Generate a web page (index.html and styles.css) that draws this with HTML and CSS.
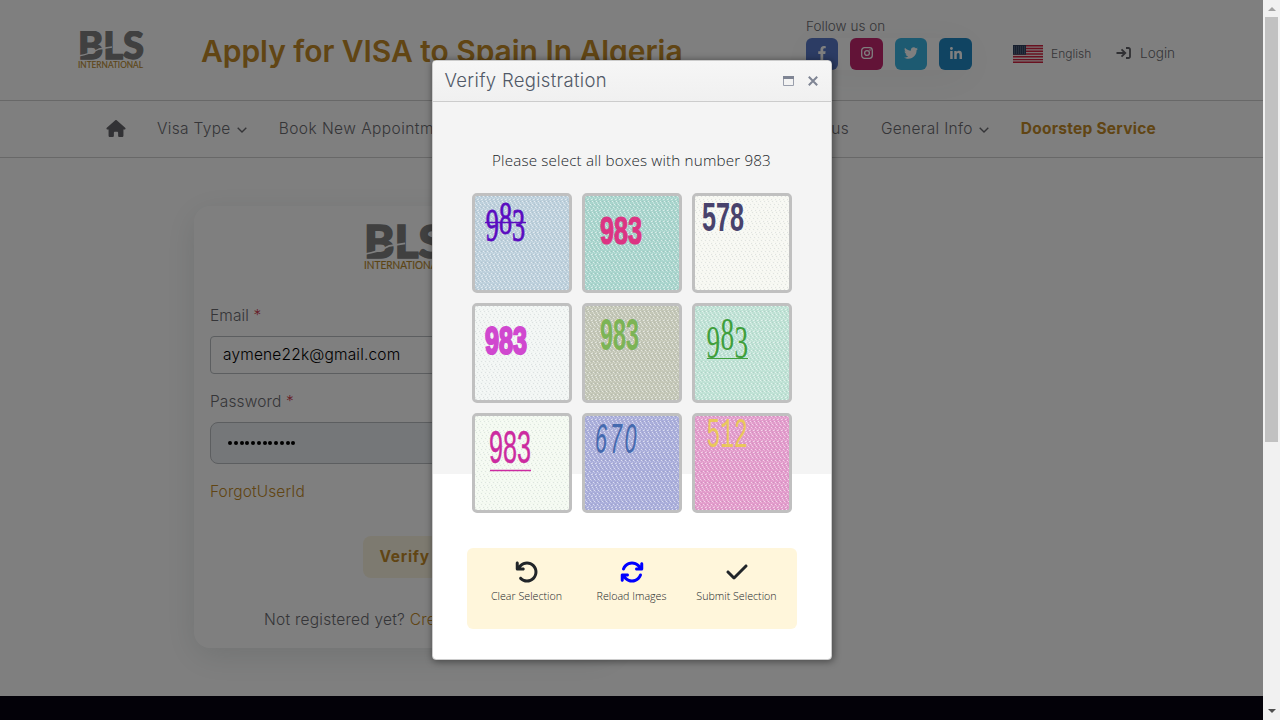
FILE: index.html
```html
<!DOCTYPE html>
<html lang="en">
<head>
<meta charset="utf-8">
<title>Verify Registration</title>
<link rel="stylesheet" href="styles.css">
</head>
<body>
<svg class="defs" width="0" height="0">
  <defs>
    <pattern id="weave" width="4" height="11" patternUnits="userSpaceOnUse">
      <path d="M0 0h1v1h-1zM2 3h1v1h-1zM3 5h1v1h-1zM1 8h1v1h-1z" fill="#fff" opacity=".6"/>
      <path d="M2 0h1v1h-1zM0 3h1v1h-1zM1 5h1v1h-1zM3 8h1v1h-1z" fill="#456" opacity=".12"/>
      <path d="M1 1h1v1h-1zM3 2h1v2h-1zM0 6h1v2h-1zM2 9h1v1h-1z" fill="#fff" opacity=".28"/>
    </pattern>
    <symbol id="logo" viewBox="0 0 66 38">
      <text class="logo-bls" x="0" y="28" textLength="66" lengthAdjust="spacingAndGlyphs">BLS</text>
      <path d="M0 25Q12 23 21 18L34 16" fill="none" stroke="#fff" stroke-width="1.4"/>
      <text class="logo-int" x="0" y="37" textLength="65" lengthAdjust="spacingAndGlyphs">INTERNATIONAL</text>
    </symbol>
    <symbol id="chev" viewBox="0 0 10 6"><path d="M.7.7 5 5 9.300.7" fill="none" stroke="currentColor" stroke-width="1.4"/></symbol>
  </defs>
</svg>
<div class="screen">
  <div class="page">
    <header class="top">
      <svg class="logo"><use href="#logo"/></svg>
      <h1 class="title">Apply for VISA to Spain In Algeria</h1>
      <div class="follow">
        <span class="follow-label">Follow us on</span>
        <div class="social">
          <a class="soc fb"><svg width="10" height="14" viewBox="0 0 320 512"><path fill="#fff" d="M279.14 288l14.22-92.66h-88.91v-60.13c0-25.35 12.42-50.06 52.24-50.06h40.42V6.26S260.43 0 225.36 0c-73.22 0-121.08 44.38-121.08 124.72v70.62H22.89V288h81.39v224h100.17V288z"/></svg></a>
          <a class="soc ig"><svg width="12" height="12" viewBox="0 0 12 12"><rect x=".7" y=".7" width="10.600" height="10.600" rx="2.800" fill="none" stroke="#fff" stroke-width="1.300"/><circle cx="6" cy="6" r="2.400" fill="none" stroke="#fff" stroke-width="1.300"/><circle cx="9" cy="3" r=".8" fill="#fff"/></svg></a>
          <a class="soc tw"><svg width="14" height="14" viewBox="0 0 512 512"><path fill="#fff" d="M459.37 151.716c.325 4.548.325 9.097.325 13.645 0 138.72-105.583 298.558-298.558 298.558-59.452 0-114.68-17.219-161.137-47.106 8.447.974 16.568 1.299 25.34 1.299 49.055 0 94.213-16.568 130.274-44.832-46.132-.975-84.792-31.188-98.112-72.772 6.498.974 12.995 1.624 19.818 1.624 9.421 0 18.843-1.3 27.614-3.573-48.081-9.747-84.143-51.98-84.143-102.985v-1.299c13.969 7.797 30.214 12.67 47.431 13.319-28.264-18.843-46.781-51.005-46.781-87.391 0-19.492 5.197-37.36 14.294-52.954 51.655 63.675 129.3 105.258 216.365 109.807-1.624-7.797-2.599-15.918-2.599-24.04 0-57.828 46.782-104.934 104.934-104.934 30.213 0 57.502 12.67 76.67 33.137 23.715-4.548 46.456-13.32 66.599-25.34-7.798 24.366-24.366 44.833-46.132 57.827 21.117-2.273 41.584-8.122 60.426-16.243-14.292 20.791-32.161 39.308-52.628 54.253z"/></svg></a>
          <a class="soc li"><svg width="12" height="12" viewBox="0 0 448 448"><path fill="#fff" d="M100.28 448H7.4V148.9h92.88zM53.79 108.1C24.09 108.1 0 83.5 0 53.8a53.79 53.79 0 0 1 107.58 0c0 29.7-24.1 54.3-53.79 54.3zM447.9 448h-92.68V302.4c0-34.7-.7-79.2-48.29-79.2-48.29 0-55.69 37.7-55.69 76.7V448h-92.78V148.9h89.08v40.8h1.3c12.4-23.5 42.69-48.3 87.88-48.3 94 0 111.28 61.9 111.28 142.3V448z"/></svg></a>
        </div>
      </div>
      <a class="lang">
        <svg width="30" height="18" viewBox="0 0 30 18"><rect width="30" height="18" fill="#f4e8e8"/><path d="M0 .7h30M0 3.500h30M0 6.300h30M0 9h30M0 11.800h30M0 14.600h30M0 17.300h30" stroke="#d22340" stroke-width="1.400"/><rect width="13" height="9.700" fill="#30405f"/><path d="M1 2h12M1 4h12M1 6h12M1 8h12" stroke="#8b99aa" stroke-width=".8" stroke-dasharray="1 1"/></svg>
        <span>English</span>
      </a>
      <a class="login">
        <svg width="15" height="12" viewBox="0 0 15 12"><path d="M.5 6H9M5.500 2.300 9.300 6 5.500 9.700M10 1h2.500a1.500 1.500 0 0 1 1.500 1.500v7a1.500 1.500 0 0 1-1.500 1.500H10" fill="none" stroke="currentColor" stroke-width="1.800"/></svg>
        <span>Login</span>
      </a>
    </header>
    <nav class="nav">
      <svg class="home" width="20" height="17" viewBox="0 0 576 512"><path fill="currentColor" d="M575.8 255.5c0 18-15 32.1-32 32.1h-32l.7 160.2c0 2.7-.2 5.4-.5 8.1V472c0 22.1-17.9 40-40 40H392c-22.1 0-40-17.9-40-40V384c0-17.700-14.300-32-32-32H256c-17.700 0-32 14.300-32 32v88c0 22.100-17.900 40-40 40H104c-22.100 0-40-17.900-40-40V287.600H32c-18 0-32-14-32-32.100 0-9 3-17 10-24L266.400 8c7-7 15-8 22-8s15 2 21 7L564.800 231.500c8 7 12 15 11 24z"/></svg>
      <a class="visa">Visa Type</a><svg class="chev"><use href="#chev"/></svg>
      <a class="book">Book New Appointment</a>
      <span class="nav-right">
        <a class="contact">Contact us</a>
        <a class="info">General Info</a><svg class="chev"><use href="#chev"/></svg>
        <a class="door">Doorstep Service</a>
      </span>
    </nav>
    <main class="main">
      <section class="card">
        <svg class="card-logo"><use href="#logo"/></svg>
        <label class="lab">Email <i>*</i></label>
        <div class="field"><span>aymene22k@gmail.com</span></div>
        <label class="lab lab2">Password <i>*</i></label>
        <div class="field pass"><span class="dots"><b></b><b></b><b></b><b></b><b></b><b></b><b></b><b></b><b></b><b></b><b></b><b></b></span></div>
        <a class="forgot">ForgotUserId</a>
        <div class="btn">Verify</div>
        <p class="reg">Not registered yet? <a>Create</a></p>
      </section>
    </main>
    <footer class="foot"></footer>
  </div>
  <div class="overlay">
    <div class="modal">
      <div class="bar">
        <span class="bar-title">Verify Registration</span>
        <svg width="11" height="10" viewBox="0 0 11 10"><path d="M.5 1.500v8h10v-8" fill="none" stroke="#9a9fac"/><path d="M0 0h11v3H0z" fill="#7f8594"/></svg>
        <svg width="10" height="10" viewBox="0 0 10 10"><path d="M.8.8l8.400 8.400M9.200.8.800 9.200" stroke="#7f8594" stroke-width="2"/></svg>
      </div>
      <div class="body">
        <p class="prompt">Please select all boxes with number 983</p>
        <div class="grid">
          <svg class="tile t1"><rect class="w" width="94" height="94"/><text class="lib" transform="scale(.56 1)" x="19 43 66" y="45 38 45">983</text><path d="M10 26.500h41" stroke="#5a0bc0" stroke-width="1.300"/></svg>
          <svg class="tile t2"><rect class="w" width="94" height="94"/><text class="ar" x="15" y="48" textLength="42" lengthAdjust="spacingAndGlyphs">983</text></svg>
          <svg class="tile t3"><rect class="w" width="94" height="94"/><text x="7" y="35" textLength="42" lengthAdjust="spacingAndGlyphs">578</text></svg>
          <svg class="tile t4"><rect class="w" width="94" height="94"/><text class="ar" x="10" y="48" textLength="42" lengthAdjust="spacingAndGlyphs">983</text></svg>
          <svg class="tile t5"><rect class="w" width="94" height="94"/><text x="15" y="44" textLength="39" lengthAdjust="spacingAndGlyphs">983</text></svg>
          <svg class="tile t6"><rect class="w" width="94" height="94"/><text class="lib" transform="scale(.58 1)" x="20 44 68" y="52 44 52">983</text><path d="M12 52.500h41" stroke="#3f9f3c" stroke-width="1.200"/></svg>
          <svg class="tile t7"><rect class="w" width="94" height="94"/><text x="14" y="47" textLength="42" lengthAdjust="spacingAndGlyphs">983</text><path d="M15 54.500h41" stroke="#cc2ba0" stroke-width="1.300"/></svg>
          <svg class="tile t8"><rect class="w" width="94" height="94"/><text transform="scale(.5 1)" x="20 50 79" y="37">670</text></svg>
          <svg class="tile t9"><rect class="w" width="94" height="94"/><text transform="scale(.55 1)" x="21 46 71" y="31">512</text></svg>
        </div>
        <div class="actions">
          <div class="act"><svg width="24" height="24" viewBox="0 0 512 512"><path fill="#212529" d="M125.700 160H176c17.700 0 32 14.300 32 32s-14.300 32-32 32H48c-17.700 0-32-14.300-32-32V64c0-17.700 14.300-32 32-32s32 14.300 32 32v51.200L97.600 97.600c87.500-87.500 229.300-87.500 316.800 0s87.500 229.300 0 316.800s-229.300 87.500-316.800 0c-12.500-12.500-12.500-32.800 0-45.300s32.800-12.500 45.300 0c62.500 62.500 163.800 62.500 226.300 0s62.500-163.800 0-226.300s-163.800-62.500-226.300 0L125.700 160z"/></svg><span>Clear Selection</span></div>
          <div class="act"><svg width="24" height="24" viewBox="0 0 512 512"><path fill="#00f" d="M105.100 202.600c7.700-21.800 20.200-42.300 37.800-59.800c62.500-62.500 163.800-62.500 226.300 0L386.300 160H352c-17.700 0-32 14.300-32 32s14.300 32 32 32H463.500h.4c17.700 0 32-14.300 32-32V80c0-17.700-14.300-32-32-32s-32 14.300-32 32v35.200L414.400 97.600c-87.500-87.500-229.300-87.500-316.800 0C73.200 122 55.600 150.700 44.800 181.400c-5.900 16.700 2.900 34.900 19.500 40.800s34.900-2.900 40.800-19.500zM39 289.300c-5 1.500-9.800 4.200-13.700 8.200c-4 4-6.700 8.800-8.100 14c-.3 1.200-.6 2.500-.8 3.800c-.3 1.700-.4 3.400-.4 5.100V432c0 17.700 14.300 32 32 32s32-14.300 32-32V396.900l17.600 17.500c87.500 87.400 229.300 87.400 316.700 0c24.400-24.400 42.100-53.100 52.900-83.700c5.900-16.700-2.900-34.900-19.500-40.800s-34.900 2.900-40.800 19.500c-7.700 21.800-20.200 42.300-37.800 59.800c-62.500 62.500-163.800 62.500-226.300 0l-.1-.1L125.600 352H160c17.700 0 32-14.300 32-32s-14.300-32-32-32H48.400c-1.600 0-3.200 .1-4.800 .3s-3.100 .5-4.600 1z"/></svg><span>Reload Images</span></div>
          <div class="act"><svg width="24" height="24" viewBox="-32 0 512 512"><path fill="#212529" d="M438.600 105.400c12.500 12.500 12.500 32.800 0 45.300l-256 256c-12.500 12.500-32.800 12.500-45.300 0l-128-128c-12.500-12.500-12.500-32.800 0-45.300s32.800-12.500 45.300 0L160 338.700 393.400 105.400c12.500-12.500 32.800-12.500 45.300 0z"/></svg><span>Submit Selection</span></div>
        </div>
      </div>
    </div>
  </div>
  <div class="scroll"><i class="up"></i><div class="thumb"></div><i class="down"></i></div>
</div>
</body>
</html>
```
FILE: styles.css
```css
* { box-sizing: border-box; }
body { margin: 0; font-family: Inter, "Open Sans", sans-serif; font-weight: 350; color: #6b6b70; }
.defs { display: block; position: absolute; }
.screen { display: flex; width: 1280px; height: 720px; overflow: hidden; position: relative; background: #fff; }
.page { width: 1263px; height: 720px; display: flex; flex-direction: column; }
.logo-bls { font: 900 38px Lato, sans-serif; fill: #808080; stroke: #808080; stroke-width: 1.3; }
.logo-int { font: 400 9.8px Lato, sans-serif; fill: #b98a2c; stroke: #b98a2c; stroke-width: .15; }

.top { height: 101px; border-bottom: 1px solid #d0d0d0; display: flex; padding-left: 78px; flex: none; }
.logo { width: 66px; height: 38px; margin-top: 31px; flex: none; }
.title { margin: 32px 0 0 57px; width: 605px; font-size: 30px; line-height: 38px; font-weight: 600; color: #c28a28; letter-spacing: -.05px; white-space: nowrap; flex: none; }
.follow { width: 207px; padding-top: 17px; flex: none; }
.follow-label { display: block; font-size: 13.5px; line-height: 19px; letter-spacing: .03px; margin-bottom: 2px; }
.social { display: flex; gap: 12px; width: 166px; border-radius: 20px; box-shadow: 0 6px 40px rgba(60,80,80,.07); }
.soc { width: 33px; height: 32px; border-radius: 6px; display: flex; align-items: center; justify-content: center; padding-bottom: 2px; flex: none; }
.soc.fb, .soc.tw { width: 32px; }
.fb { background: #5878c8; }
.ig { background: #c4266f; }
.tw { background: #3ab4e2; }
.li { background: #2088c4; }
.lang { display: flex; align-items: center; height: 20px; margin-top: 44px; gap: 8px; font-size: 12px; width: 103px; flex: none; }
.lang span { margin-top: -2px; }
.login { display: flex; align-items: center; height: 20px; margin-top: 43px; gap: 9px; font-size: 13.6px; }
.login svg { color: #606066; }

.nav { height: 57px; border-bottom: 1px solid #d0d0d0; display: flex; align-items: center; padding: 0 0 2px 106px; font-size: 15.5px; letter-spacing: .32px; flex: none; white-space: nowrap; }
.home { color: #65656a; margin-right: 31px; flex: none; }
.chev { width: 10px; height: 6px; margin: 3px 0 0 6px; flex: none; }
.book { margin-left: 32px; width: 170px; letter-spacing: .45px; }
.nav-right { margin-left: auto; margin-right: 107px; display: flex; align-items: center; }
.info { margin-left: 32px; }
.door { margin-left: 32px; font-weight: 700; color: #c28a28; letter-spacing: .25px; }

.main { height: 538px; flex: none; padding: 48px 0 0 194px; }
.card { width: 420px; height: 442px; border-radius: 16px; padding: 18px 16px 0; background: #fff; box-shadow: 0 8px 32px rgba(60,80,80,.14); font-size: 15.5px; line-height: 24px; }
.card-logo { display: block; width: 80px; height: 46px; margin-left: 154px; }
.lab { display: block; margin-top: 34px; letter-spacing: .12px; }
.lab i { color: #d04050; font-style: normal; }
.field { height: 38px; margin-top: 8px; border: 1px solid #b8bcc0; border-radius: 4px; padding: 0 12px; line-height: 36px; letter-spacing: .17px; color: #000; }
.lab2 { margin-top: 16px; }
.pass { height: 42px; border-radius: 8px; background: #ebeef2; padding-left: 17px; }
.dots { display: flex; gap: 1.75px; padding-top: 18px; }
.dots b { width: 4px; height: 4px; border-radius: 2px; background: #000; }
.forgot { display: block; margin-top: 16px; color: #c28a28; letter-spacing: .1px; }
.btn { margin: 32px auto 0; width: 83px; height: 42px; border-radius: 8px; background: #fbf5e0; color: #c28a28; font-weight: 700; letter-spacing: .7px; line-height: 41px; padding-left: 17px; }
.reg { margin: 30px 0 0 54px; white-space: nowrap; letter-spacing: .25px; }
.reg a { color: #c28a28; }
.foot { flex: 1; background: #060210; }

.overlay { position: absolute; inset: 0 17px 0 0; background: rgba(0,0,0,.5); display: flex; justify-content: center; align-items: flex-start; }
.modal { margin-top: 60px; width: 400px; height: 600px; border: 1px solid #ccc; border-radius: 4px; background: linear-gradient(#f4f4f4 0 413px, #fff 413px); box-shadow: 1px 1px 7px 1px rgba(0,0,0,.4); overflow: hidden; }
.bar { height: 41px; display: flex; align-items: center; gap: 14px; padding: 0 13px 0 12px; border-bottom: 1px solid #ccc; background: linear-gradient(#f6f6f6, #f0f0f0); }
.bar-title { flex: 1; font-size: 18.5px; letter-spacing: .31px; color: #515967; margin-top: -2px; }
.body { display: flex; flex-direction: column; align-items: center; font-family: "Open Sans", "Noto Sans", sans-serif; }
.prompt { margin: 46px 0 0; font-size: 15.2px; line-height: 24px; color: #212529; letter-spacing: .17px; white-space: nowrap; }
.grid { display: grid; grid-template-columns: repeat(3, 100px); gap: 10px; margin-top: 21px; }
.tile { width: 100px; height: 100px; border: 3px solid #c0c0c0; border-radius: 5px; font: 39px "Liberation Sans", sans-serif; }
.w { fill: url(#weave); stroke: none; }
.lib { font-family: "Liberation Serif", serif; font-size: 47px; }
.ar { font-weight: 700; stroke-width: 1.2px; }
.t1 { background: #bdd0dc; fill: #5a0bc0; stroke: #5a0bc0; stroke-width: .8px; }
.t2 { background: #a9d5cd; fill: #dc3483; stroke: #dc3483; }
.t3 { background: #f6f7f1; fill: #48426c; font-weight: 700; font-size: 41px; }
.t4 { background: #f1f5f3; fill: #d048cf; stroke: #d048cf; }
.t4 .ar { stroke-width: 2.2px; }
.t5 { background: #c4c7b7; fill: #7cb455; font-weight: 700; font-size: 45px; }
.t6 { background: #bfe2d5; fill: #3f9f3c; }
.t7 { background: #f3f9f0; fill: #cc2ba0; stroke: #cc2ba0; stroke-width: .4px; font-size: 46px; }
.t8 { background: #aaaedb; fill: #456aaf; font-style: italic; font-size: 43px; }
.t9 { background: #e39ccc; fill: #e9c75d; font-family: "Liberation Mono", monospace; font-size: 42px; }
.actions { margin-top: 35px; width: 330px; height: 81px; border-radius: 6px; background: #fff6db; display: grid; grid-template-columns: repeat(3, 105px); justify-content: center; padding-top: 12px; }
.act { display: flex; flex-direction: column; align-items: center; font-size: 10.7px; line-height: 16px; gap: 4px; color: #212529; white-space: nowrap; font-weight: 350; }

.scroll { width: 17px; background: #f1f1f1; padding: 6px 2px 0; flex: none; }
.up, .down { display: block; width: 0; margin: 0 auto; border: 4px solid transparent; }
.up { border-top: 0; border-bottom: 4px solid #a3a3a3; margin-top: 1px; }
.thumb { height: 425px; background: #c1c1c1; margin-top: 6px; }
.down { border-bottom: 0; border-top: 4px solid #505050; margin-top: 267px; }
```
